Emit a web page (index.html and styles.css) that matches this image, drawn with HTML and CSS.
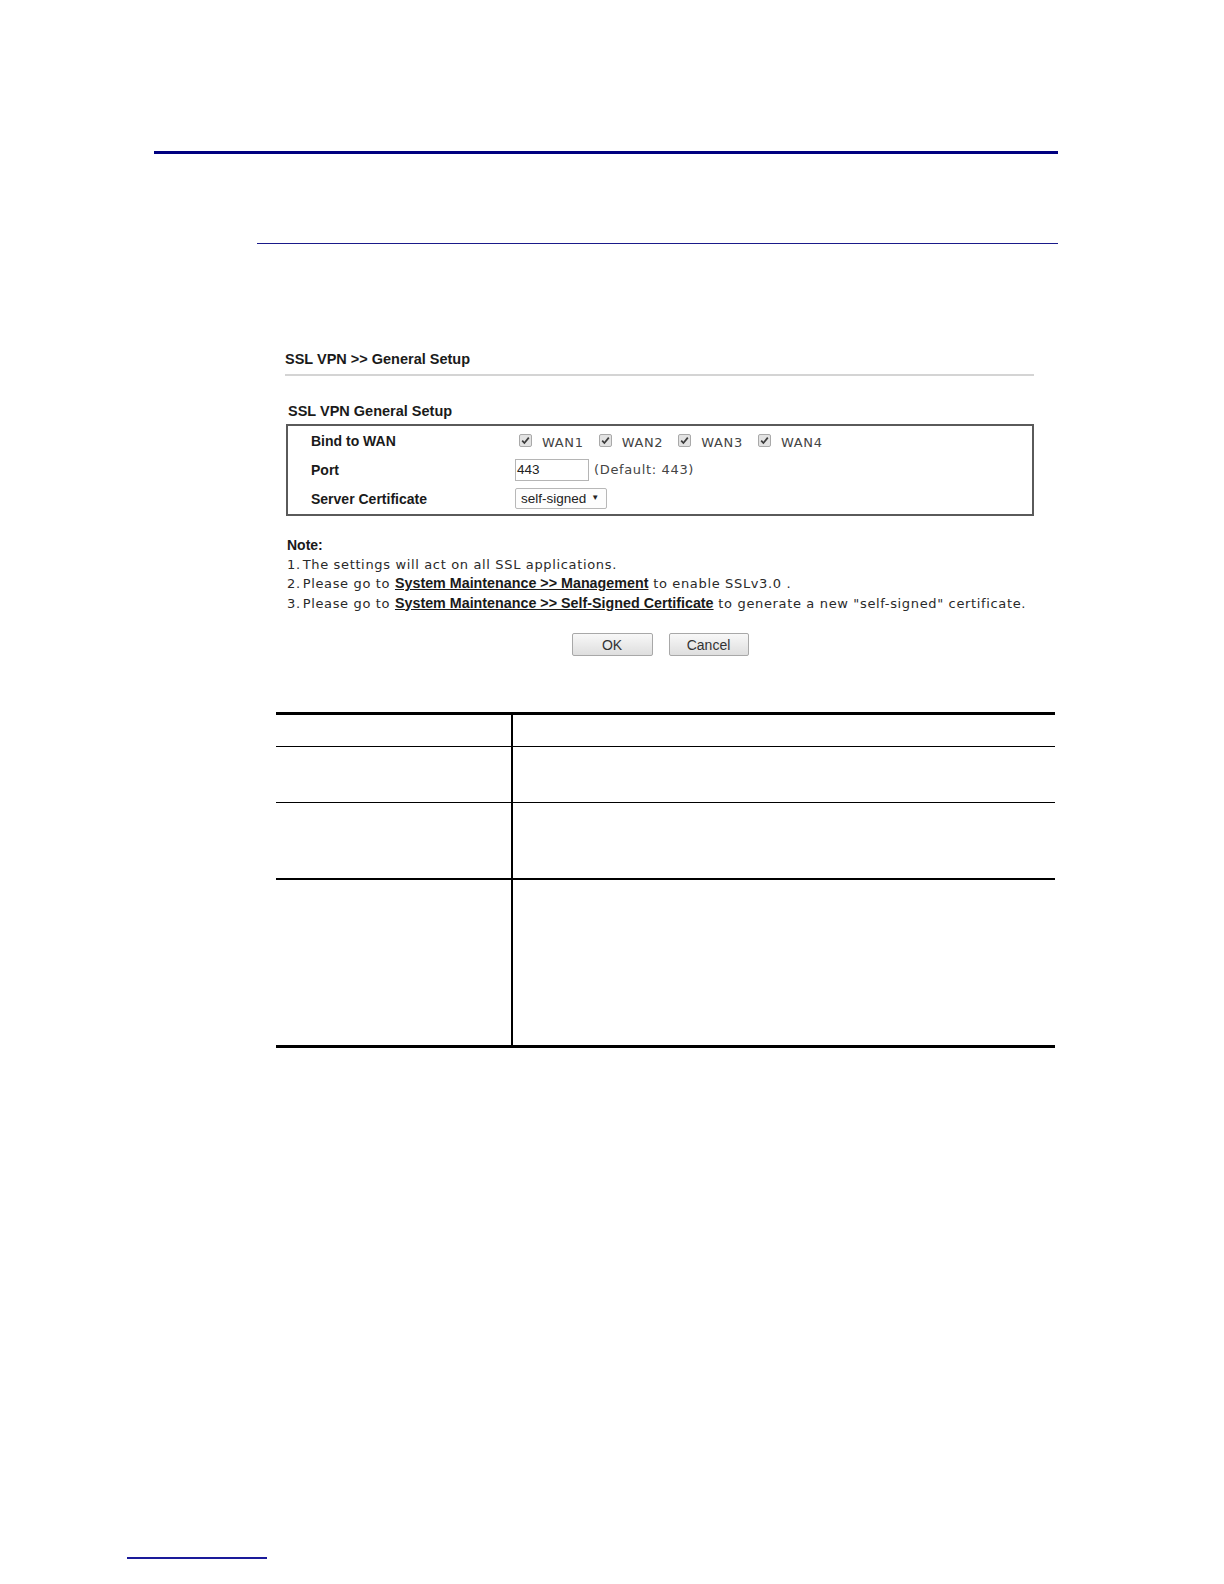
FILE: index.html
```html
<!DOCTYPE html>
<html>
<head>
<meta charset="utf-8">
<link rel="stylesheet" href="styles.css">
</head>
<body>
<div class="page">
  <div class="rule-top"></div>
  <div class="rule-sub"></div>

  <div class="panel">
    <div class="panel-title">SSL VPN &gt;&gt; General Setup</div>
    <div class="panel-sep"></div>

    <div class="section-title">SSL VPN General Setup</div>
    <div class="form-box">
      <div class="label">Bind to WAN</div>
      <div class="value wans">
        <span class="wan"><span class="cb"><svg viewBox="0 0 13 13" width="13" height="13"><rect x="0.5" y="0.5" width="12" height="12" rx="1.5" fill="#e2e2e2" stroke="#a9a9a9"/><path d="M3.2 6.6 L5.4 9 L9.8 3.6" fill="none" stroke="#3a3a3a" stroke-width="1.7"/></svg></span>WAN1</span>
        <span class="wan"><span class="cb"><svg viewBox="0 0 13 13" width="13" height="13"><rect x="0.5" y="0.5" width="12" height="12" rx="1.5" fill="#e2e2e2" stroke="#a9a9a9"/><path d="M3.2 6.6 L5.4 9 L9.8 3.6" fill="none" stroke="#3a3a3a" stroke-width="1.7"/></svg></span>WAN2</span>
        <span class="wan"><span class="cb"><svg viewBox="0 0 13 13" width="13" height="13"><rect x="0.5" y="0.5" width="12" height="12" rx="1.5" fill="#e2e2e2" stroke="#a9a9a9"/><path d="M3.2 6.6 L5.4 9 L9.8 3.6" fill="none" stroke="#3a3a3a" stroke-width="1.7"/></svg></span>WAN3</span>
        <span class="wan"><span class="cb"><svg viewBox="0 0 13 13" width="13" height="13"><rect x="0.5" y="0.5" width="12" height="12" rx="1.5" fill="#e2e2e2" stroke="#a9a9a9"/><path d="M3.2 6.6 L5.4 9 L9.8 3.6" fill="none" stroke="#3a3a3a" stroke-width="1.7"/></svg></span>WAN4</span>
      </div>
      <div class="label">Port</div>
      <div class="value"><span class="input">443</span><span class="vtext">(Default: 443)</span></div>
      <div class="label">Server Certificate</div>
      <div class="value"><span class="select">self-signed <span class="arrow">&#9660;</span></span></div>
    </div>

    <div class="notes">
      <div class="note-head">Note:</div>
      <div class="note">1.&#8202;The settings will act on all SSL applications.</div>
      <div class="note">2.&#8202;Please go to <a class="lnk">System Maintenance &gt;&gt; Management</a> to enable SSLv3.0 .</div>
      <div class="note">3.&#8202;Please go to <a class="lnk">System Maintenance &gt;&gt; Self-Signed Certificate</a> to generate a new "self-signed" certificate.</div>
    </div>

    <div class="buttons">
      <span class="btn">OK</span>
      <span class="btn">Cancel</span>
    </div>
  </div>

  <div class="desc-table">
    <div class="cell c1 r1"></div><div class="cell c2 r1"></div>
    <div class="cell c1 r2"></div><div class="cell c2 r2"></div>
    <div class="cell c1 r3"></div><div class="cell c2 r3"></div>
    <div class="cell c1 r4"></div><div class="cell c2 r4"></div>
  </div>

  <div class="footer-rule"></div>
</div>
</body>
</html>
```
FILE: styles.css
```css
html, body {
  margin: 0;
  padding: 0;
  background: #ffffff;
}
.page {
  width: 1224px;
  height: 1584px;
  padding-top: 151px;
  box-sizing: border-box;
  font-family: "Liberation Sans", Arial, sans-serif;
  color: #222;
}
.rule-top {
  margin-left: 154px;
  width: 904px;
  height: 3px;
  background: #000080;
}
.rule-sub {
  margin-left: 257px;
  margin-top: 89px;
  width: 801px;
  height: 1px;
  background: #1a1a8a;
}
.panel {
  margin-left: 285px;
  width: 749px;
  margin-top: 107px;
}
.panel-title {
  font-weight: bold;
  font-size: 14.5px;
  line-height: 16px;
  color: #1a1a1a;
}
.panel-sep {
  margin-top: 7px;
  height: 2px;
  background: #d4d4d4;
}
.section-title {
  margin-top: 27px;
  padding-left: 3px;
  font-weight: bold;
  font-size: 14.5px;
  line-height: 16px;
  color: #1a1a1a;
}
.form-box {
  margin-top: 5px;
  margin-left: 1px;
  border: 2px solid #5a5a5a;
  display: grid;
  grid-template-columns: 227px 1fr;
  grid-template-rows: 29px 29px 29px;
  padding: 0 0 1px 0;
  height: 87px;
  box-sizing: content-box;
}
.label {
  padding-left: 23px;
  font-weight: bold;
  font-size: 14px;
  color: #1a1a1a;
  display: flex;
  align-items: center;
}
.label:first-child {
  align-items: flex-start;
  padding-top: 7px;
}
.value {
  display: flex;
  align-items: center;
  font-family: "DejaVu Sans", Verdana, sans-serif;
  font-size: 13px;
  letter-spacing: 0.65px;
  color: #3a3a3a;
}
.wans {
  padding-left: 4px;
  padding-top: 3px;
}
.wan {
  display: inline-flex;
  align-items: center;
  margin-right: 15px;
  color: #444;
}
.cb {
  display: inline-flex;
  margin-right: 10px;
  position: relative;
  top: -2px;
}
.input {
  display: inline-block;
  box-sizing: border-box;
  width: 74px;
  height: 22px;
  border: 1px solid #b5b5b5;
  font-family: "Liberation Sans", Arial, sans-serif;
  font-size: 13.5px;
  letter-spacing: 0;
  line-height: 20px;
  padding-left: 1px;
  color: #222;
}
.vtext {
  margin-left: 5px;
  color: #444;
}
.select {
  display: inline-flex;
  align-items: center;
  box-sizing: border-box;
  width: 92px;
  height: 21px;
  border: 1px solid #b8b8b8;
  border-radius: 2px;
  padding-left: 5px;
  font-family: "Liberation Sans", Arial, sans-serif;
  font-size: 13.5px;
  letter-spacing: 0;
  color: #222;
  background: #fdfdfd;
}
.arrow {
  font-size: 8px;
  margin-left: 5px;
  position: relative;
  top: -1px;
}
.notes {
  margin-top: 20px;
  padding-left: 2px;
}
.note-head {
  font-weight: bold;
  font-size: 14px;
  line-height: 18.5px;
  color: #1a1a1a;
}
.note {
  font-family: "DejaVu Sans", Verdana, sans-serif;
  font-size: 13px;
  letter-spacing: 0.65px;
  line-height: 19.5px;
  color: #2a2a2a;
  white-space: nowrap;
}
.lnk {
  font-family: "Liberation Sans", Arial, sans-serif;
  font-weight: bold;
  font-size: 14.3px;
  letter-spacing: 0;
  text-decoration: underline;
  color: #1a1a1a;
}
.buttons {
  margin-top: 20px;
  display: flex;
  justify-content: center;
  gap: 16px;
  padding-left: 1px;
}
.btn {
  box-sizing: border-box;
  width: 81px;
  height: 23px;
  border: 1px solid #a8a8a8;
  border-radius: 2px;
  background: linear-gradient(#f8f8f8, #dedede);
  display: flex;
  align-items: center;
  justify-content: center;
  font-size: 14px;
  color: #333;
}
.btn + .btn {
  width: 80px;
}
.desc-table {
  margin-top: 56px;
  margin-left: 276px;
  width: 779px;
  display: grid;
  grid-template-columns: 237px 1fr;
  grid-template-rows: 32px 56px 77px 165px;
  border-top: 3px solid #000;
  border-bottom: 3px solid #000;
}
.cell {
  box-sizing: border-box;
}
.c1 {
  border-right: 2px solid #000;
}
.r1, .r2 {
  border-bottom: 1.5px solid #000;
}
.r3 {
  border-bottom: 2.5px solid #000;
}
.footer-rule {
  margin-top: 509px;
  margin-left: 127px;
  width: 140px;
  height: 2px;
  background: #1a1a9a;
}
```
